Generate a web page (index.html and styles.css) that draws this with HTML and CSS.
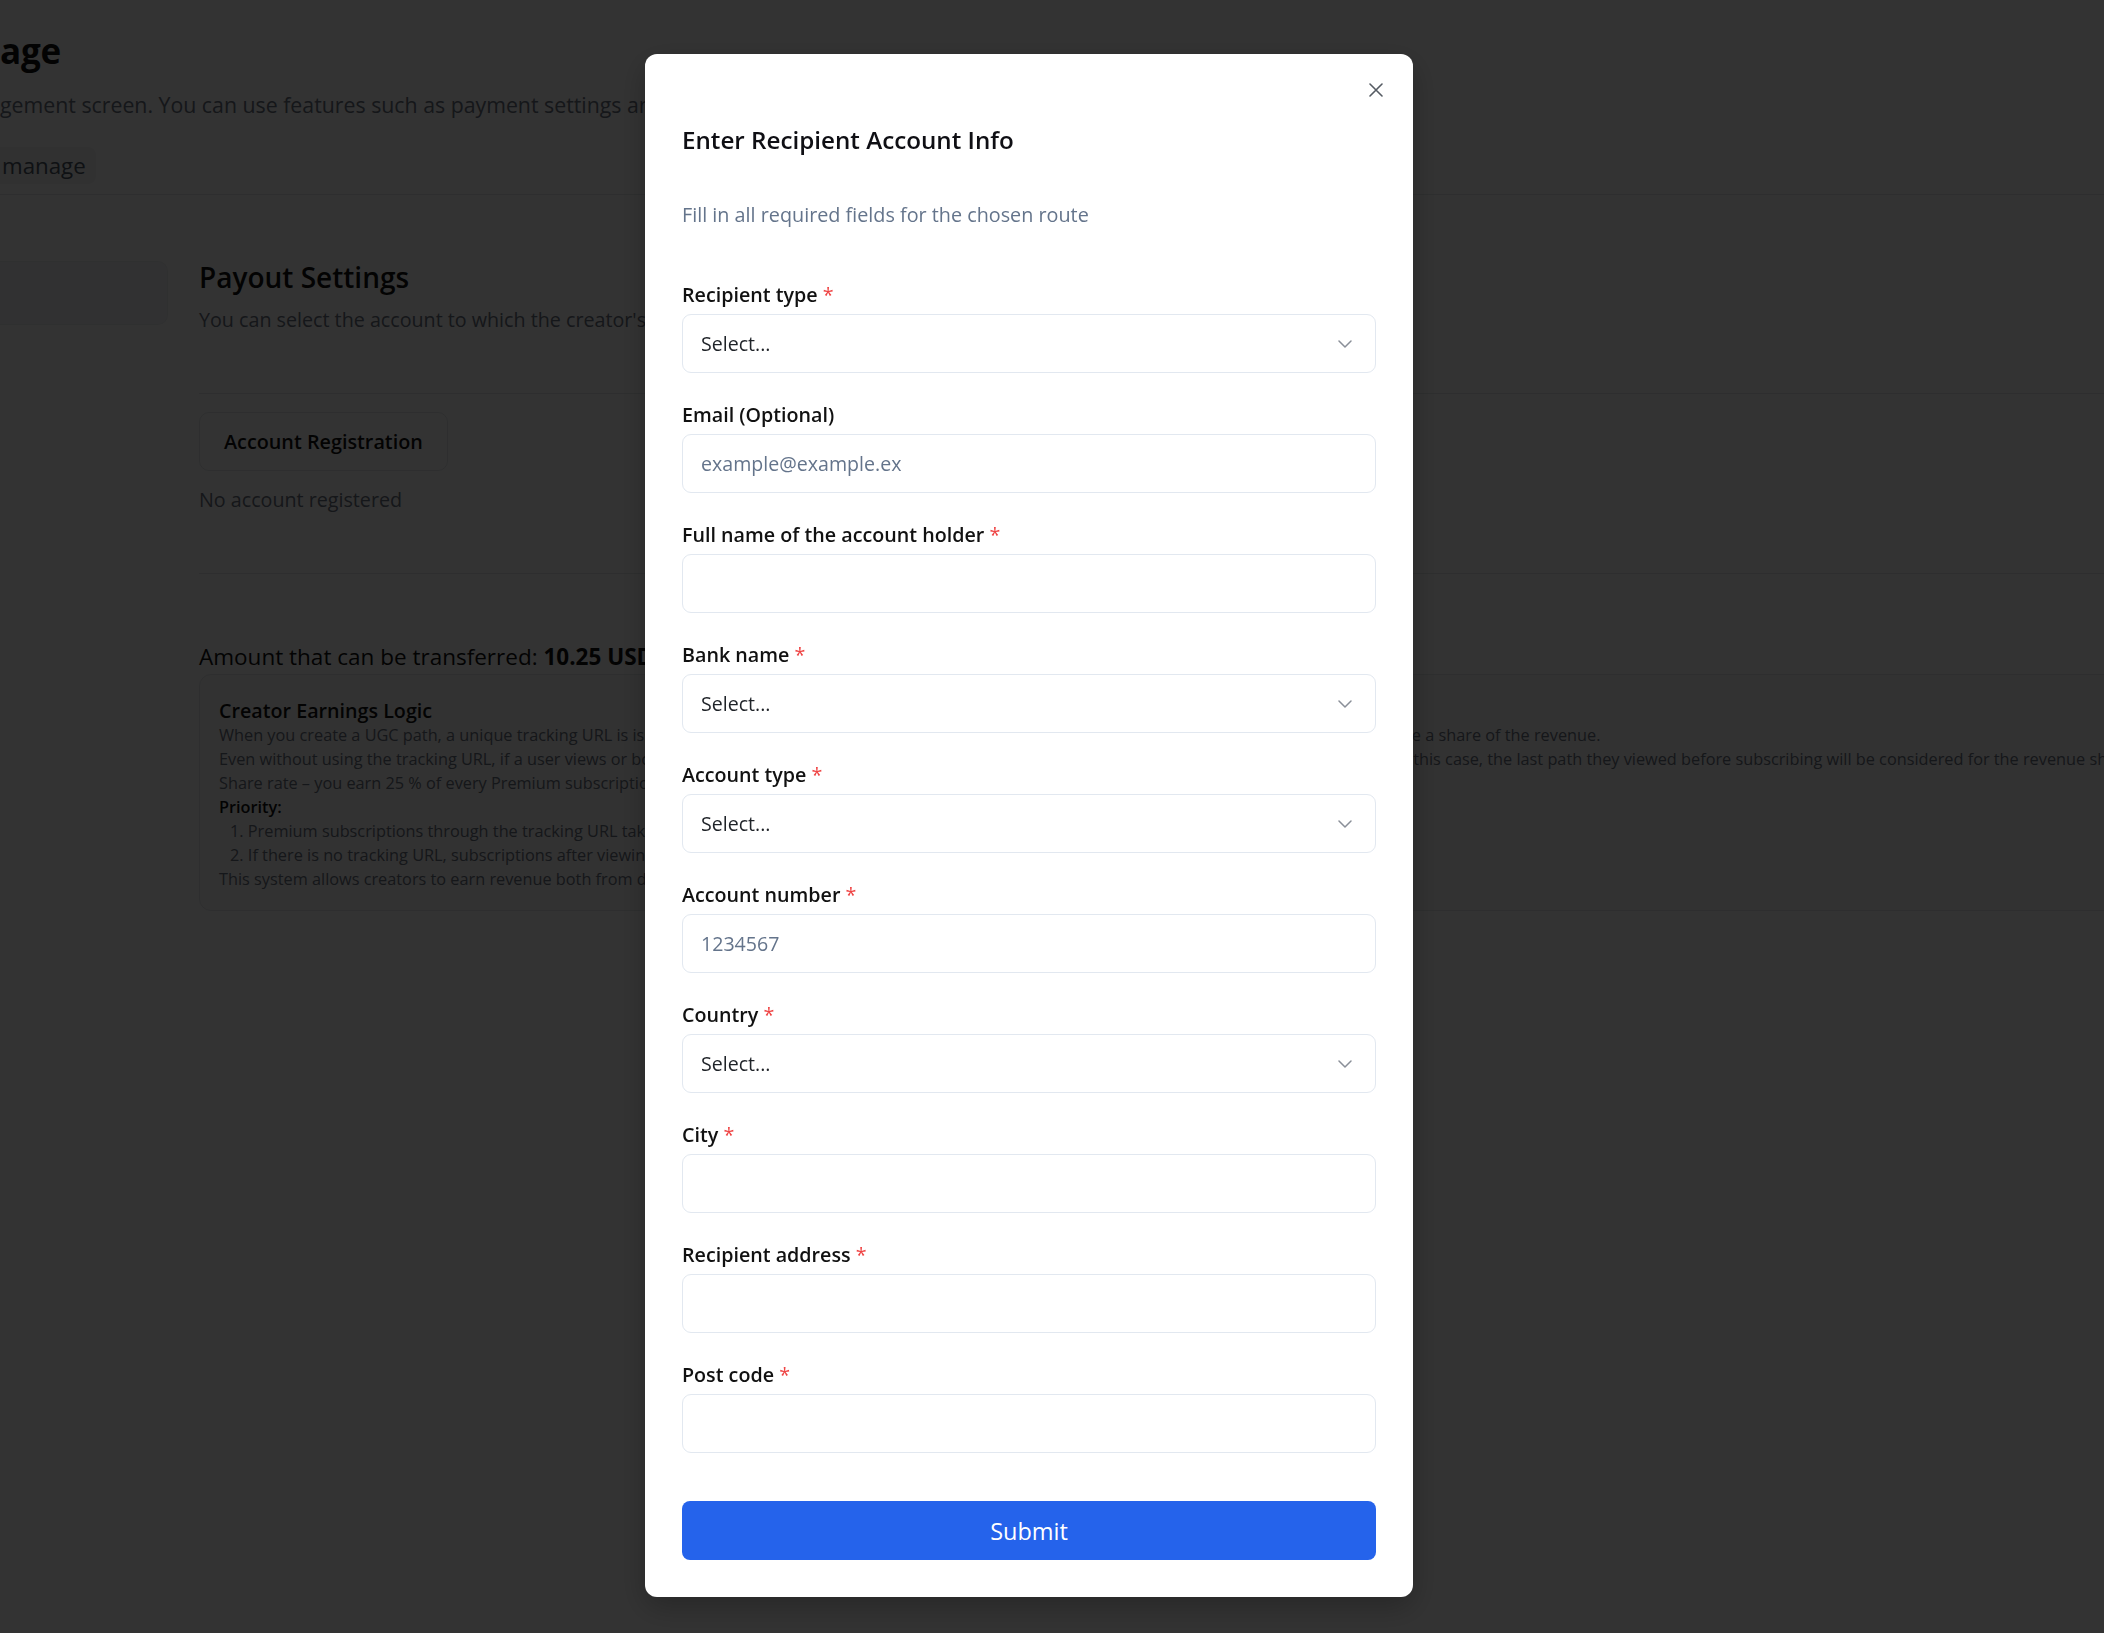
FILE: index.html
```html
<!DOCTYPE html>
<html lang="en">
<head>
<meta charset="utf-8">
<title>Payout Settings</title>
<link rel="stylesheet" href="styles.css">
</head>
<body>
<div class="page">
  <header class="page-header">
    <h1 class="page-title">age</h1>
    <p class="page-desc">gement screen. You can use features such as payment settings and revenue checks here.</p>
    <nav class="tabs">
      <span class="tab tab-active">manage</span>
    </nav>
  </header>

  <div class="main">
    <aside class="sidebar">
      <div class="side-item"></div>
    </aside>
    <section class="content">
      <div class="section-head">
        <h2 class="section-title">Payout Settings</h2>
        <p class="section-desc">You can select the account to which the creator's revenue will be paid out.</p>
      </div>
      <div class="section-block">
        <button class="outline-btn" type="button">Account Registration</button>
        <p class="muted">No account registered</p>
      </div>
      <div class="amount-block">
        <p class="amount">Amount that can be transferred: <strong>10.25 USD</strong></p>
        <div class="logic-card">
          <h3 class="logic-title">Creator Earnings Logic</h3>
          <p class="logic-line">When you create a UGC path, a unique tracking URL is issued just for you. If a user subscribes to Premium after accessing the path via this URL, you will receive a share of the revenue.</p>
          <p class="logic-line">Even without using the tracking URL, if a user views or bookmarks your UGC path directly and then later subscribes to Premium, you can still earn revenue. In this case, the last path they viewed before subscribing will be considered for the revenue share.</p>
          <p class="logic-line">Share rate – you earn 25 % of every Premium subscription fee generated through your paths.</p>
          <p class="logic-line logic-strong">Priority:</p>
          <ol class="logic-list">
            <li>Premium subscriptions through the tracking URL take precedence.</li>
            <li>If there is no tracking URL, subscriptions after viewing a path are attributed to the last path viewed.</li>
          </ol>
          <p class="logic-line">This system allows creators to earn revenue both from direct links and organic views.</p>
        </div>
      </div>
    </section>
  </div>
</div>

<div class="overlay">
  <div class="modal" role="dialog" aria-labelledby="modal-title">
    <button class="close-btn" type="button" aria-label="Close">
      <svg width="14" height="14" viewBox="0 0 14 14" fill="none" stroke="currentColor" stroke-width="1.6" stroke-linecap="round"><path d="M1 1L13 13M13 1L1 13"/></svg>
    </button>
    <h2 class="modal-title" id="modal-title">Enter Recipient Account Info</h2>
    <p class="modal-desc">Fill in all required fields for the chosen route</p>

    <form class="form">
      <div class="field">
        <label class="label">Recipient type <span class="req">*</span></label>
        <button class="control select" type="button"><span>Select...</span><svg class="chev" width="14" height="8" viewBox="0 0 14 8" fill="none" stroke="currentColor" stroke-width="1.5" stroke-linecap="round" stroke-linejoin="round"><path d="M1 1L7 7L13 1"/></svg></button>
      </div>
      <div class="field">
        <label class="label">Email (Optional)</label>
        <input class="control" type="text" placeholder="example@example.ex">
      </div>
      <div class="field">
        <label class="label">Full name of the account holder <span class="req">*</span></label>
        <input class="control" type="text">
      </div>
      <div class="field">
        <label class="label">Bank name <span class="req">*</span></label>
        <button class="control select" type="button"><span>Select...</span><svg class="chev" width="14" height="8" viewBox="0 0 14 8" fill="none" stroke="currentColor" stroke-width="1.5" stroke-linecap="round" stroke-linejoin="round"><path d="M1 1L7 7L13 1"/></svg></button>
      </div>
      <div class="field">
        <label class="label">Account type <span class="req">*</span></label>
        <button class="control select" type="button"><span>Select...</span><svg class="chev" width="14" height="8" viewBox="0 0 14 8" fill="none" stroke="currentColor" stroke-width="1.5" stroke-linecap="round" stroke-linejoin="round"><path d="M1 1L7 7L13 1"/></svg></button>
      </div>
      <div class="field">
        <label class="label">Account number <span class="req">*</span></label>
        <input class="control" type="text" placeholder="1234567">
      </div>
      <div class="field">
        <label class="label">Country <span class="req">*</span></label>
        <button class="control select" type="button"><span>Select...</span><svg class="chev" width="14" height="8" viewBox="0 0 14 8" fill="none" stroke="currentColor" stroke-width="1.5" stroke-linecap="round" stroke-linejoin="round"><path d="M1 1L7 7L13 1"/></svg></button>
      </div>
      <div class="field">
        <label class="label">City <span class="req">*</span></label>
        <input class="control" type="text">
      </div>
      <div class="field">
        <label class="label">Recipient address <span class="req">*</span></label>
        <input class="control" type="text">
      </div>
      <div class="field">
        <label class="label">Post code <span class="req">*</span></label>
        <input class="control" type="text">
      </div>
      <button class="submit-btn" type="button">Submit</button>
    </form>
  </div>
</div>
</body>
</html>
```

FILE: styles.css
```css
* { box-sizing: border-box; }

html, body {
  margin: 0;
  padding: 0;
}

body {
  background: #ffffff;
  color: #111111;
  font-family: "Open Sans", "Noto Sans", Arial, sans-serif;
  overflow: hidden;
  width: 2104px;
  height: 1633px;
}

/* ---------- background page ---------- */
.page {
  width: 2400px;
}

.page-header {
  padding-top: 29px;
  border-bottom: 1px solid #e5e7eb;
  padding-bottom: 10px;
}

.page-title {
  margin: 0;
  font-size: 35px;
  line-height: 44px;
  font-weight: 700;
  color: #111111;
  letter-spacing: -0.2px;
}

.page-desc {
  margin: 17px 0 0;
  font-size: 21.3px;
  line-height: 30px;
  color: #6b7280;
  white-space: nowrap;
}

.tabs {
  display: flex;
  margin-top: 27px;
}

.tab {
  font-size: 22.3px;
  line-height: 37px;
  color: #6b7280;
  padding: 0 10px 0 2px;
}

.tab-active {
  background: #f3f4f6;
  border-radius: 0 8px 8px 0;
  color: #4b5563;
}

.main {
  display: flex;
  gap: 31px;
  padding-top: 66px;
}

.sidebar {
  width: 168px;
  flex: none;
}

.side-item {
  height: 64px;
  background: #f5f6f8;
  border: 1px solid #eceef1;
  border-left: none;
  border-radius: 0 10px 10px 0;
}

.content {
  flex: 1;
  margin-top: -4px;
}

.section-head {
  padding-bottom: 58px;
  border-bottom: 1px solid #e5e7eb;
}

.section-title {
  margin: 0;
  font-size: 28px;
  line-height: 40px;
  font-weight: 600;
  color: #111111;
}

.section-desc {
  margin: 8px 0 0;
  font-size: 19.7px;
  line-height: 30px;
  color: #6b7280;
  white-space: nowrap;
}

.section-block {
  padding: 18px 0 58px;
  border-bottom: 1px solid #e5e7eb;
}

.outline-btn {
  display: block;
  height: 59px;
  padding: 0 24px;
  border: 1px solid #e5e7eb;
  border-radius: 10px;
  background: #ffffff;
  font-family: inherit;
  font-size: 19.8px;
  font-weight: 600;
  color: #111111;
}

.muted {
  margin: 14px 0 0;
  font-size: 19.7px;
  line-height: 30px;
  color: #6b7280;
}

.amount-block {
  padding-top: 66px;
}

.amount {
  margin: 0;
  font-size: 22.5px;
  line-height: 34px;
  color: #111111;
  white-space: nowrap;
}

.amount strong { font-weight: 700; }

.logic-card {
  border: 1px solid #e5e7eb;
  border-radius: 12px;
  padding: 21px 19px 19px;
  background: #fafafa;
}

.logic-title {
  margin: 0 0 -3px;
  font-size: 19.7px;
  line-height: 30px;
  font-weight: 600;
  color: #111111;
}

.logic-line {
  margin: 0;
  font-size: 16.3px;
  line-height: 24px;
  color: #6b7280;
  white-space: nowrap;
}

.logic-strong {
  font-weight: 600;
  color: #111111;
}

.logic-list {
  margin: 0;
  padding: 0 0 0 11px;
  list-style: none;
  counter-reset: item;
}

.logic-list li {
  font-size: 16.3px;
  line-height: 24px;
  color: #6b7280;
  white-space: nowrap;
  counter-increment: item;
}

.logic-list li::before {
  content: counter(item) ". ";
}

/* ---------- modal ---------- */
.overlay {
  position: fixed;
  inset: 0;
  background: rgba(0, 0, 0, 0.8);
  display: flex;
  align-items: flex-start;
  padding: 54px 0 0 645px;
}

.modal {
  position: relative;
  width: 768px;
  background: #ffffff;
  border-radius: 12px;
  padding: 67px 37px 37px;
  box-shadow: 0 10px 30px rgba(0, 0, 0, 0.25);
}

.close-btn {
  position: absolute;
  top: 29px;
  right: 30px;
  width: 14px;
  height: 14px;
  padding: 0;
  border: none;
  background: none;
  color: #555b63;
  display: flex;
}

.modal-title {
  margin: 0;
  font-size: 24.2px;
  line-height: 37px;
  font-weight: 600;
  color: #0f0f14;
}

.modal-desc {
  margin: 42px 0 0;
  font-size: 19.8px;
  line-height: 30px;
  color: #64748b;
}

.form {
  margin-top: 50px;
  display: flex;
  flex-direction: column;
  gap: 27px;
}

.field {
  display: flex;
  flex-direction: column;
  gap: 4px;
}

.label {
  font-size: 19.7px;
  line-height: 30px;
  font-weight: 600;
  color: #111111;
}

.req {
  color: #ef4444;
  font-weight: 500;
}

.control {
  width: 100%;
  height: 59px;
  border: 1px solid #e2e8f0;
  border-radius: 9px;
  background: #ffffff;
  padding: 0 18px;
  font-family: inherit;
  font-size: 19.6px;
  color: #1f2328;
  outline: none;
}

.control::placeholder {
  color: #64748b;
  opacity: 1;
}

.select {
  display: flex;
  align-items: center;
  justify-content: space-between;
  text-align: left;
  padding-right: 23px;
}

.chev {
  color: #8a8f98;
  flex: none;
}

.submit-btn {
  margin-top: 21px;
  height: 59px;
  width: 100%;
  border: none;
  border-radius: 8px;
  background: #2563eb;
  color: #ffffff;
  font-family: inherit;
  font-size: 23.5px;
  font-weight: 500;
}
```
